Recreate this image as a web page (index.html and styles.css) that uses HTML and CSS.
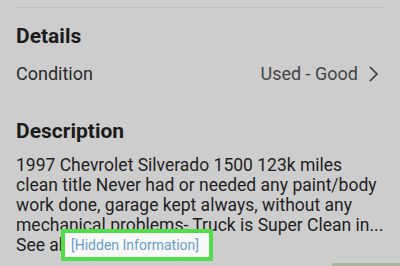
FILE: index.html
```html
<!DOCTYPE html>
<html>
<head>
<meta charset="utf-8">
<link rel="stylesheet" href="styles.css">
</head>
<body>
<div class="page">
  <div class="divider"></div>
  <h2 class="heading heading-details">Details</h2>
  <div class="row">
    <span class="row-label">Condition</span>
    <span class="row-value">Used - Good
      <svg class="chev" width="12" height="16" viewBox="0 0 12 16"><polyline points="2,1 9,8 2,15" fill="none" stroke="#3a3a3a" stroke-width="1.6"/></svg>
    </span>
  </div>
  <h2 class="heading heading-desc">Description</h2>
  <p class="desc">1997 Chevrolet Silverado 1500 123k miles<br>clean title Never had or needed any paint/body<br>work done, garage kept always, without any<br>mechanical problems- Truck is Super Clean in...<br>See all</p>
  <div class="hidden-box"><span class="hidden-text">[Hidden Information]</span></div>
  <div class="corner"></div>
</div>
</body>
</html>
```
FILE: styles.css
```css
html, body {
  margin: 0;
  padding: 0;
  background: #cdcdcd;
}
.page {
  position: relative;
  width: 400px;
  height: 266px;
  overflow: hidden;
  padding: 0 16px;
  box-sizing: border-box;
  font-family: Roboto, "Liberation Sans", sans-serif;
  color: #1f1f1f;
}
.divider {
  margin-top: 7px;
  height: 1px;
  background: #bdbdbd;
}
.heading {
  margin: 0;
  font-size: 21px;
  line-height: 26px;
  font-weight: 700;
  color: #1c1c1c;
}
.heading-details {
  margin-top: 15px;
}
.row {
  margin-top: 13px;
  display: flex;
  justify-content: space-between;
  align-items: center;
  font-size: 18px;
  line-height: 24px;
}
.row-label {
  color: #2a2a2a;
}
.row-value {
  display: flex;
  align-items: center;
  gap: 10px;
  color: #444;
  padding-right: 4px;
}
.chev {
  display: block;
}
.heading-desc {
  margin-top: 32px;
}
.desc {
  margin: 11px 0 0;
  font-size: 17.5px;
  line-height: 20px;
  white-space: nowrap;
  color: #1f1f1f;
}
.hidden-box {
  position: absolute;
  left: 61px;
  top: 229px;
  width: 152px;
  height: 32px;
  box-sizing: border-box;
  border: 4px solid #4fde4a;
  background: #f7f8f7;
  display: flex;
  align-items: center;
  padding-left: 6px;
}
.hidden-text {
  font-size: 14px;
  color: #6b9ccc;
}
.corner {
  position: absolute;
  left: 332px;
  top: 263px;
  width: 68px;
  height: 3px;
  background: #a9b79e;
}
```
